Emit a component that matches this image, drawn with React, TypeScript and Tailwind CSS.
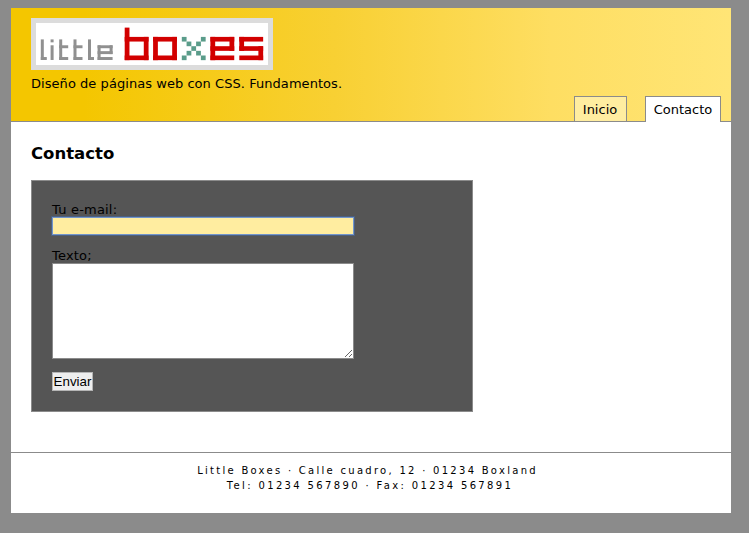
const BOXES: { x: number; color: string; rows: string[] }[] = [
  { x: 124.7, color: "#d20000", rows: ["#....", "#....", "#####", "#...#", "#...#", "#...#", "#####"] },
  { x: 153.1, color: "#d20000", rows: [".....", ".....", "#####", "#...#", "#...#", "#...#", "#####"] },
  { x: 181.8, color: "#5a9c8a", rows: [".....", ".....", "#...#", ".#.#.", "..#..", ".#.#.", "#...#"] },
  { x: 210.4, color: "#d20000", rows: [".....", ".....", "#####", "#...#", "#####", "#....", "#####"] },
  { x: 239.3, color: "#d20000", rows: [".....", ".....", "#####", "#....", "#####", "....#", "#####"] },
];

const LITTLE: { x: number; rows: string[] }[] = [
  { x: 40.8, rows: ["#.", "#.", "#.", "#.", "#.", "#.", "##"] },
  { x: 50.6, rows: ["#", ".", "#", "#", "#", "#", "#"] },
  { x: 59.2, rows: ["#..", "#..", "###", "#..", "#..", "#..", "###"] },
  { x: 73.5, rows: ["#..", "#..", "###", "#..", "#..", "#..", "###"] },
  { x: 88, rows: ["#.", "#.", "#.", "#.", "#.", "#.", "##"] },
  { x: 97.6, rows: [".....", ".....", "#####", "#...#", "#####", "#....", "#####"] },
];

// Lengths of consecutive filled cells in one line, with their start index.
function runs(line: string): { start: number; length: number }[] {
  return [...line.matchAll(/#+/g)].map((m) => ({ start: m.index ?? 0, length: m[0].length }));
}

function Blocks({ x, y, w, h, rows, color }: { x: number; y: number; w: number; h: number; rows: string[]; color: string }) {
  const columns = [...rows[0]].map((_, i) => rows.map((row) => row[i]).join(""));
  return (
    <g fill={color}>
      {rows.flatMap((row, r) =>
        runs(row)
          .filter((run) => run.length > 1 || !columns[run.start].includes("##"))
          .map((run) => (
            <rect key={`r${r}-${run.start}`} x={x + run.start * w} y={y + r * h} width={run.length * w} height={h} />
          )),
      )}
      {columns.flatMap((column, c) =>
        runs(column)
          .filter((run) => run.length > 1)
          .map((run) => (
            <rect key={`c${c}-${run.start}`} x={x + c * w} y={y + run.start * h} width={w} height={run.length * h} />
          )),
      )}
      {columns.length === 1 && <rect x={x} y={y} width={w} height={h} />}
    </g>
  );
}

function Logo() {
  return (
    <svg role="img" aria-label="little boxes" className="block h-[52px] w-[242px]" viewBox="31 18 242 52">
      <rect x="31" y="18" width="242" height="52" fill="#dcdcdc" />
      <rect x="36" y="23" width="232" height="42" fill="#fff" />
      {LITTLE.map((l) => (
        <Blocks key={l.x} x={l.x} y={39.4} w={3} h={2.94} rows={l.rows} color="#909090" />
      ))}
      {BOXES.map((l) => (
        <Blocks key={l.x} x={l.x} y={27.6} w={4.77} h={4.65} rows={l.rows} color={l.color} />
      ))}
    </svg>
  );
}

export default function App() {
  return (
    <div className="h-[533px] w-[749px] bg-[#8b8b8b] pt-2 pl-[11px] font-['DejaVu_Sans',Verdana,sans-serif] text-[13px] leading-4 text-black">
      <div className="flex h-[505px] w-[720px] flex-col bg-white">
        <header className="flex h-[114px] justify-between border-b border-[#8b8b8b] bg-[linear-gradient(to_right,#f4c600_10%,#f8d033_45%,#fede62_75%,#ffe576_100%)] pt-[10px] pr-[10px] pl-5">
          <div>
            <Logo />
            <p className="mt-[6px] tracking-[0.05px] whitespace-nowrap">Diseño de páginas web con CSS. Fundamentos.</p>
          </div>
          <nav className="-mb-px flex items-end gap-[18px]">
            <a className="flex h-[26px] w-[53px] items-center justify-center border border-[#8b8b8b] bg-[#ffeda0] pt-0.5 pr-px">Inicio</a>
            <a className="flex h-[26px] w-[76px] items-center justify-center border border-b-0 border-[#8b8b8b] bg-white">Contacto</a>
          </nav>
        </header>
        <main className="h-[330px] pt-[22px] pl-5">
          <h1 className="text-[16.5px] leading-5 font-bold">Contacto</h1>
          <form className="mt-[16px] h-[232px] w-[442px] border border-[#8b8b8b] bg-[#555] pt-[21px] pl-5">
            <label className="block h-[15px] leading-[15px] tracking-[0.2px]">Tu e-mail:</label>
            <input className="block h-[18px] w-[302px] border border-[#7295cc] bg-[#ffeda0] outline-1 outline-[#4b6080]" />
            <label className="mt-[13px] block h-[15px] leading-[15px] tracking-[0.2px]">Texto;</label>
            <textarea className="block h-[96px] w-[302px] resize border border-[#8b8b8b] bg-white" />
            <button type="button" className="mt-[13px] block h-[19px] w-[41px] border border-[#b5b5b5] bg-[#eee] font-['Liberation_Sans',Arial,sans-serif] text-[13.33px] leading-4">
              Enviar
            </button>
          </form>
        </main>
        <footer className="flex-1 border-t border-[#8b8b8b] pt-[10px] text-center text-[10px] leading-[15px]">
          <p className="pr-[7px] tracking-[2.28px]">Little Boxes · Calle cuadro, 12 · 01234 Boxland</p>
          <p className="pr-0.5 tracking-[2.36px]">Tel: 01234 567890 · Fax: 01234 567891</p>
        </footer>
      </div>
    </div>
  );
}
